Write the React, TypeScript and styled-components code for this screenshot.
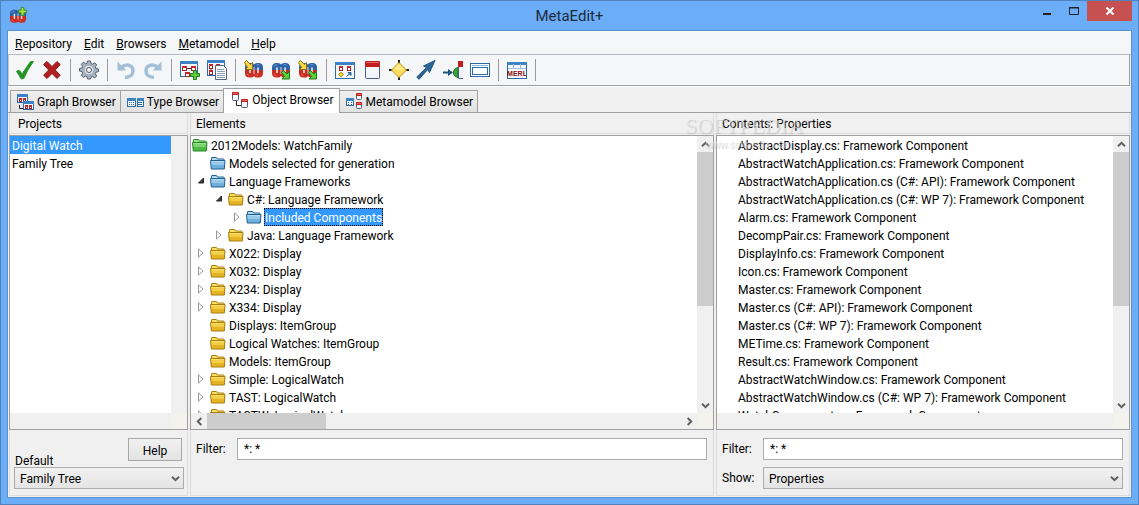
import React from 'react';
import styled, { createGlobalStyle, css } from 'styled-components';

const GlobalStyle = createGlobalStyle`
  *, *::before, *::after { box-sizing: border-box; }
  body { margin: 0; }
  body, button, input, select {
    font-family: Roboto, "Noto Sans", sans-serif;
    font-size: 12px;
    line-height: 18px;
    color: #000;
  }
`;

const LINE = '#a0a0a0';
const FACE = '#f0f0f0';

/* ---------- window frame ---------- */

const Window = styled.div`
  display: flex;
  flex-direction: column;
  height: 100vh;
  min-height: 360px;
  padding: 0 6px 6px;
  border: 1px solid #5083bd;
  background: #6badf6;
`;

const TitleBar = styled.header`
  display: grid;
  grid-template-columns: 1fr auto 1fr;
  height: 29px;
  flex: none;
`;

const Title = styled.h1`
  margin: 0;
  font-size: 15px;
  line-height: 31px;
  font-weight: 400;
  color: #1c2b3d;
`;

const AppMark = styled.div`
  padding: 6px 0 0 2px;
`;

const WindowControls = styled.div`
  display: flex;
  justify-content: flex-end;
  align-items: flex-start;
`;

const WindowButton = styled.button<{ $close?: boolean }>`
  display: flex;
  align-items: center;
  justify-content: center;
  width: ${p => (p.$close ? 45 : 27)}px;
  height: 20px;
  padding: 0;
  border: 0;
  background: ${p => (p.$close ? '#c75050' : 'transparent')};
`;

const Client = styled.main`
  display: flex;
  flex-direction: column;
  flex: 1;
  min-height: 0;
  border: 1px solid #5a92d0;
  background: ${FACE};
`;

const MenuBar = styled.nav`
  display: flex;
  flex: none;
  height: 24px;
  padding: 1px 1px 0;
  background: #f5f6f7;
  border-bottom: 1px solid #b5bac4;
`;

const MenuItem = styled.button`
  padding: 0 6px;
  border: 0;
  background: none;
  line-height: 24px;

  &::first-letter { text-decoration: underline; }
`;

/* ---------- toolbar ---------- */

const ToolBar = styled.div`
  display: flex;
  align-items: center;
  flex: none;
  height: 31px;
  margin-right: 1px;
  padding-left: 2px;
  background: #f5f6f8;
  border: 1px solid ${LINE};
  border-top: 0;
  border-left-color: #c8c8c8;
`;

const ToolGroup = styled.div`
  display: flex;
  align-items: center;
  padding-right: 5px;
  margin-right: 4px;
  border-right: 1px solid #9a9a9a;
`;

const ToolButton = styled.button`
  display: flex;
  align-items: center;
  justify-content: center;
  width: 27px;
  height: 22px;
  padding: 0;
  border: 0;
  background: none;
`;

/* ---------- tabs ---------- */

const TabBar = styled.div`
  display: flex;
  align-items: flex-end;
  flex: none;
  height: 27px;
  padding: 2px 2px 0;
  border-top: 1px solid #fff;
  border-bottom: 1px solid ${LINE};
`;

const Tab = styled.button<{ $active?: boolean }>`
  display: flex;
  align-items: center;
  gap: 3px;
  height: 22px;
  padding: 0 4px 0 6px;
  border: 1px solid ${LINE};
  border-bottom: 0;
  margin-right: -1px;
  background: linear-gradient(#efefef, #e2e2e2);
  ${p => p.$active && css`
    position: relative;
    height: 25px;
    margin-bottom: -1px;
    padding: 0 5px 2px 8px;
    background: #fff;
  `}
`;

/* ---------- panels ---------- */

const Panels = styled.div`
  display: grid;
  grid-template-columns: 179px minmax(0, 524fr) minmax(0, 414fr);
  gap: 2px;
  flex: 1;
  min-height: 0;
  padding: 0 1px 1px;
`;

const Panel = styled.section`
  position: relative;
  display: grid;
  grid-template-rows: 22px minmax(0, 1fr) 65px;
  min-width: 0;
  min-height: 0;
  border: solid #dcdcdc;
  border-width: 0 1px 1px;
  margin: 0;
`;

const PanelTitle = styled.h2<{ $inset?: boolean }>`
  margin: 0 0 1px;
  padding-left: ${p => (p.$inset ? 8 : 5)}px;
  font-size: 12px;
  font-weight: 400;
  line-height: 22px;
  border-bottom: 1px solid #dcdcdc;
`;

const ListFrame = styled.div`
  display: grid;
  grid-template-columns: minmax(0, 1fr) 16px;
  grid-template-rows: minmax(0, 1fr) 16px;
  margin: 0 -1px;
  border: 1px solid ${LINE};
  background: ${FACE};
`;

const List = styled.ul`
  margin: 0;
  padding: 0;
  list-style: none;
  overflow: hidden;
  background: #fff;
`;

const ListRow = styled.li<{ $indent?: number; $selected?: boolean }>`
  height: 18px;
  line-height: 20px;
  padding-left: ${p => p.$indent ?? 2}px;
  white-space: nowrap;
  ${p => p.$selected && css`
    background: #3399ff;
    color: #fff;
  `}
`;

const TreeRow = styled.li<{ $level: number }>`
  display: flex;
  align-items: center;
  height: 18px;
  padding-left: ${p => 1 + Math.max(0, p.$level - 1) * 18}px;
  white-space: nowrap;
`;

const Expander = styled.span`
  display: flex;
  justify-content: center;
  width: 18px;
`;

const TreeLabel = styled.span<{ $selected?: boolean }>`
  margin-left: 2px;
  padding: 0 1px;
  height: 18px;
  line-height: 20px;
  ${p => p.$selected && css`
    line-height: 18px;
    padding: 0;
    background: #3399ff;
    color: #fff;
    border: 1px dotted #000;
  `}
`;

const Scroll = styled.div<{ $horizontal?: boolean }>`
  display: flex;
  flex-direction: ${p => (p.$horizontal ? 'row' : 'column')};
  min-width: 0;
  min-height: 0;
`;

const ScrollArrow = styled.button`
  display: flex;
  flex: none;
  align-items: center;
  justify-content: center;
  width: 16px;
  height: 16px;
  padding: 0;
  border: 0;
  background: none;
`;

const ScrollTrack = styled.div`
  flex: 1;
  min-width: 0;
  min-height: 0;
`;

const ScrollThumb = styled.div<{ $horizontal?: boolean }>`
  width: ${p => (p.$horizontal ? '25%' : '100%')};
  height: ${p => (p.$horizontal ? '100%' : '63%')};
  background: #cdcdcd;
`;

const Corner = styled.div`
  grid-area: 2 / 2;
  background: #f3f2ec;
`;

/* ---------- panel footers ---------- */

const ProjectFooter = styled.div`
  display: grid;
  grid-template-columns: 1fr 54px;
  grid-template-rows: 29px 22px;
  padding: 8px 3px 0 4px;
`;

const DefaultLabel = styled.label`
  align-self: end;
  padding-left: 1px;
  line-height: 12px;
`;

const HelpButton = styled.button`
  height: 23px;
  margin-right: 2px;
  margin-left: -2px;
  border: 1px solid #a8a8a8;
  background: linear-gradient(#f1f1f1, #e3e3e3);
  padding: 2px 0 0;
`;

const FieldGrid = styled.div`
  display: grid;
  grid-template-columns: 41px minmax(0, 1fr);
  grid-auto-rows: 22px;
  row-gap: 7px;
  align-items: center;
  padding: 8px 6px 0 5px;

  label { line-height: 20px; }
`;

const TextField = styled.input`
  width: 100%;
  height: 22px;
  padding: 0 6px;
  border: 1px solid #abadb3;
  background: #fff;
`;

const SelectWrap = styled.span<{ $wide?: boolean }>`
  position: relative;
  display: block;
  ${p => p.$wide && css`grid-column: 1 / -1;`}

  svg {
    position: absolute;
    right: 4px;
    top: 7px;
    pointer-events: none;
  }
`;

const Select = styled.select`
  display: block;
  width: 100%;
  height: 22px;
  padding: 1px 5px 0;
  border: 1px solid #acacac;
  border-radius: 0;
  appearance: none;
  background: linear-gradient(#f1f1f1, #e4e4e4);
`;

const Watermark = styled.div`
  position: absolute;
  left: -32px;
  top: 1px;
  font-family: "Liberation Serif", serif;
  font-size: 22px;
  line-height: 24px;
  white-space: nowrap;
  text-align: center;
  color: rgba(245, 245, 245, 0.5);
  text-shadow: 1px 1px 1px rgba(120, 120, 120, 0.3);
  pointer-events: none;

  sup { font-size: 9px; line-height: 9px; }
  small {
    display: block;
    font-family: "Liberation Sans", sans-serif;
    font-size: 10px;
    line-height: 14px;
  }
`;

/* ---------- drawings ---------- */

const Chevron = ({ dir }: { dir: 'up' | 'down' | 'left' | 'right' }) => {
  const turn = { down: 0, left: 90, up: 180, right: 270 }[dir];
  return (
    <svg width="9" height="9" viewBox="0 0 9 9" aria-hidden="true">
      <path d="M1 2.7 4.5 6.2 8 2.7" fill="none" stroke="#606060" strokeWidth="2" transform={`rotate(${turn} 4.5 4.5)`} />
    </svg>
  );
};

const folderTones = {
  green: ['#24862a', '#4cbc46', '#9be487'],
  blue: ['#24608f', '#6fb0dd', '#b4dbf4'],
  yellow: ['#a87e10', '#e6b422', '#fce063'],
};
type Tone = keyof typeof folderTones;

const Folder = ({ tone }: { tone: Tone }) => {
  const [edge, mid, light] = folderTones[tone];
  return (
    <svg width="16" height="14" viewBox="0 0 16 14" aria-hidden="true">
      <path d="M1.500 12.500v-10.500q0-.5.5-.5h4.500l1 1.500h6q.5 0 .5.5v2" fill={light} stroke={edge} />
      <path d="M.5 4.500h14.500l-.7 8.500h-13z" fill={mid} stroke={edge} />
      <path d="M1.300 5.500h12.700l-.2 3.500H1.600z" fill={light} opacity=".6" />
      <path d="M1.200 5.500h13" stroke={light} />
    </svg>
  );
};

const Twisty = ({ open }: { open: boolean }) => (
  <svg width="8" height="10" viewBox="0 0 8 10" aria-hidden="true">
    {open
      ? <path d="M6.500 2v5h-5z" fill="#404040" stroke="#222" />
      : <path d="M1.500.9v8.200l4.500-4.100z" fill="#fff" stroke="#9a9a9a" />}
  </svg>
);

const Box = ({ x, y, w = 5, h = 5 }: { x: number; y: number; w?: number; h?: number }) => (
  <g>
    <rect x={x + 0.5} y={y + 0.5} width={w - 1} height={h - 1} fill="#fff" stroke="#a62222" />
    <path d={`M${x} ${y + 1}h${w}`} stroke="#c42626" strokeWidth="2" />
  </g>
);

const Card = ({ x, y, w, h, head }: { x: number; y: number; w: number; h: number; head: number }) => (
  <g>
    <rect x={x + 0.5} y={y + 0.5} width={w - 1} height={h - 1} rx="1" fill="#f2f5fa" stroke="#4e5f7a" />
    <path d={`M${x} ${y + 1}q0-1 1-1h${w - 2}q1 0 1 1v${head - 1}h-${w}z`} fill="#bf1f1f" />
    <path d={`M${x + 1} ${y + 1.5}h${w - 2}`} stroke="#e46a62" />
  </g>
);

const Frame = ({ x = 0, y = 0, w = 18, h = 16 }: { x?: number; y?: number; w?: number; h?: number }) => (
  <g>
    <rect x={x + 0.5} y={y + 0.5} width={w - 1} height={h - 1} fill="#f7fafd" stroke="#2c6aa8" />
    <path d={`M${x} ${y + 1.5}h${w}`} stroke="#3d82c4" strokeWidth="3" />
  </g>
);

const Plus = ({ x, y }: { x: number; y: number }) => (
  <path d={`M${x + 3.5} ${y + 0.5}h3v3h3v3h-3v3h-3v-3h-3v-3h3z`} fill="#5fce3c" stroke="#1c7d1c" />
);

/* Two linked loops: blue upper half, red lower half */
const Mark = () => (
  <g>
    <path d="M1 10V7.500Q1 3 5.500 3H7q2 0 3 1.500Q11 3 13 3h1.500Q19 3 19 7.500V10z" fill="#2b62a8" />
    <path d="M1 10v3q0 4.500 4.500 4.500H7q2 0 3-1.500 1 1.500 3 1.500h1.500q4.500 0 4.500-4.500v-3z" fill="#c92c20" />
    <path d="M6 8v4.500M14 8v4.500" stroke="#f3ece8" strokeWidth="1.600" strokeLinecap="round" />
    <path d="M10 7v7" stroke="#e9d5d8" strokeWidth="1" />
    <path d="M3 6.500q1-2 3-2M12.500 4.800q1.500-.5 3 .2" fill="none" stroke="#6d9bd6" />
    <path d="M3 13.500q.5 2 2.500 2.300M11.500 14q.8 1.500 2.500 1.700" fill="none" stroke="#e8685a" />
  </g>
);

const ArrowIn = () => (
  <path d="M.5 2.500 2.500.5l4 4L8.500 2.500v7h-7l2-2z" fill="#f7d648" stroke="#94700c" />
);
const ArrowOut = () => (
  <path d="M10.500 12.500l2-2 3.500 3.500 2.500-2.500v7.500h-7.500l2.500-2.500z" fill="#5fce3c" stroke="#1c7d1c" />
);

const icons: Record<string, React.ReactNode> = {
  Commit: <path d="M1.500 11.500q2-2 3.500-.5l2 3L15.500 1.500h3Q12.500 9.500 8.800 18.500 6.500 19.500 5.500 18.200 4 14.500 1.500 11.500z" fill="#259023" stroke="#2f9c2b" />,
  Abandon: <path d="M5 1.500 10 6.500 15 1.500l3.200 3L13.200 10l5 5.200-3.200 3.300-5-5-5 5-3.400-3.300L6.700 10 1.600 4.500z" fill="#b01e20" stroke="#911a1c" />,
  Options: (
    <g>
      <path d="M8.500 1h3l.5 2.500 1.600.7 2.200-1.400 1.900 2-1.300 2.100.7 1.600 2.400.5v2.600l-2.400.5-.7 1.700 1.300 2.100-1.900 2-2.200-1.400-1.600.7L11.500 19h-3L8 16.700l-1.600-.7-2.100 1.400-2-2 1.300-2.100-.6-1.700-2.500-.5V8.500L3 8l.6-1.600L2.300 4.300l2-2L6.400 3.700 8 3.300z" fill="#a9b3bf" stroke="#566170" />
      <circle cx="10" cy="10" r="5" fill="#dde2e8" stroke="#9aa4b0" />
      <circle cx="10" cy="10" r="2.500" fill="#f5f6f8" stroke="#4f5966" />
    </g>
  ),
  Undo: (
    <g>
      <path d="M5 7.500q4-3.500 8-2.200t4 5-2 5.200-6 2" fill="none" stroke="#a3c0d6" strokeWidth="3.400" />
      <path d="M1.500 1.500v9h9z" fill="#a3c0d6" />
    </g>
  ),
  Redo: (
    <g>
      <path d="M15 7.500q-4-3.500-8-2.200t-4 5 2 5.200 6 2" fill="none" stroke="#a3c0d6" strokeWidth="3.400" />
      <path d="M18.500 1.500v9h-9z" fill="#a3c0d6" />
    </g>
  ),
  'New Graph': (
    <g>
      <Frame y={1} />
      <Box x={2} y={6} /><Box x={11} y={6} /><Box x={5} y={12} />
      <path d="M7 8.500h4M13.500 11v2M10 14.500h2" stroke="#333" />
      <Plus x={10} y={10} />
    </g>
  ),
  'Graph List': (
    <g>
      <Frame />
      <Box x={2} y={4} w={4} /><Box x={2} y={10} w={4} /><Box x={9} y={4} w={4} />
      <path d="M4 9v1" stroke="#333" />
      <path d="M8.500 5.500h8l3 3v11h-11z" fill="#fff" stroke="#55657a" />
      <path d="M10 9.500h7M10 11.500h8M10 13.500h8M10 15.500h8M10 17.500h8" stroke="#8b9db5" />
    </g>
  ),
  Import: <g><Mark /><ArrowIn /></g>,
  Export: <g><Mark /><ArrowOut /></g>,
  Exchange: <g><Mark /><ArrowIn /><ArrowOut /></g>,
  'Graph Tool': (
    <g>
      <Frame y={2} w={20} h={17} />
      <Box x={4} y={6} w={4} h={5} /><Box x={12} y={6} w={4} h={5} />
      <path d="M6 12.200 8.500 14.500 6 17 3.500 14.500z" fill="#f4cf3c" stroke="#b18e1c" />
      <path d="M11.500 16.500l4-3.500M13 12.500h3v3z" stroke="#2b6396" fill="#2b6396" />
    </g>
  ),
  'Object Tool': <Card x={3} y={1} w={15} h={18} head={6} />,
  'Relationship Tool': (
    <g>
      <path d="M10 0v20M0 10h20" stroke="#222" strokeWidth="2" />
      <path d="M10 2.500 17.500 10 10 17.500 2.500 10z" fill="#fbdc5c" stroke="#c39518" />
      <path d="M10 4.500 15 9.500H5z" fill="#fdeb9a" />
    </g>
  ),
  'Role Tool': (
    <path d="M.8 17 10.500 7.500 7.500 6l11.500-5.500-5.500 12-1.800-3L3 19.300z" fill="#2c6595" stroke="#1f5380" />
  ),
  'Port Tool': (
    <g>
      <path d="M0 12.500h6" stroke="#1f5380" strokeWidth="2" />
      <path d="M5 9l5 3.500L5 16z" fill="#1f5380" />
      <path d="M15 7.500q-4.500 1-4.500 5t4.500 5z" fill="#39a53a" stroke="#1b6e20" />
      <path d="M20 1.500h-4.500v17H20" fill="#eef2f8" stroke="#4e5f7a" />
      <path d="M15 1h5v6h-5z" fill="#bf1f1f" />
    </g>
  ),
  'Property Tool': (
    <g fill="#fff" stroke="#2c6aa8">
      <rect x=".5" y="3.500" width="19" height="13" />
      <rect x="2.500" y="7.500" width="15" height="7" />
      <path d="M2 5.500h16" stroke="#8db4da" />
    </g>
  ),
  'MERL Tool': (
    <g>
      <Frame y={2} w={20} h={17} />
      <path d="M6.500 4v4M13.500 4v4M1 8.500h18" stroke="#9dbedd" />
      <text x="10" y="16" textAnchor="middle" fontFamily="Liberation Sans, sans-serif" fontWeight="700" fontSize="7" fill="#8c1010">MERL</text>
    </g>
  ),
};

const toolGroups = [
  ['Commit', 'Abandon'],
  ['Options'],
  ['Undo', 'Redo'],
  ['New Graph', 'Graph List'],
  ['Import', 'Export', 'Exchange'],
  ['Graph Tool', 'Object Tool', 'Relationship Tool', 'Role Tool', 'Port Tool', 'Property Tool'],
  ['MERL Tool'],
];

const GraphTabIcon = () => (
  <svg width="17" height="16" viewBox="0 0 17 16" aria-hidden="true">
    <path d="M2.500 11v3.500h4" fill="none" stroke="#222" />
    <Frame w={11} h={9} /><Box x={2} y={4} w={3} h={4} /><Box x={6} y={4} w={3} h={4} />
    <Frame x={6} y={7} w={11} h={9} /><Box x={8} y={11} w={3} h={4} /><Box x={12} y={11} w={3} h={4} />
  </svg>
);
const TypeTabIcon = () => (
  <svg width="17" height="16" viewBox="0 0 17 16" aria-hidden="true">
    <Frame y={4} w={9} h={9} />
    <path d="M2.500 8v1M4.500 8v1M6.500 8v1M2.500 10v1M4.500 10v1M6.500 10v1" stroke="#2c6aa8" />
    <Frame x={10} y={4} w={7} h={9} />
    <path d="M11 8.500h4M11 10.500h4" stroke="#2c6aa8" />
  </svg>
);
const ObjectTabIcon = () => (
  <svg width="17" height="17" viewBox="0 0 17 17" aria-hidden="true">
    <path d="M4.500 9v4.500H9" fill="none" stroke="#222" />
    <Card x={0} y={0} w={7} h={9} head={3} />
    <Card x={9} y={7} w={7} h={9} head={3} />
  </svg>
);
const MetamodelTabIcon = () => (
  <svg width="17" height="17" viewBox="0 0 17 17" aria-hidden="true">
    <Frame y={5} w={8} h={8} />
    <path d="M2.500 9v1M5.500 9v1M2.500 11v1M5.500 11v1" stroke="#2c6aa8" />
    <Card x={10} y={0} w={6} h={7} head={3} />
    <Card x={10} y={9} w={6} h={7} head={3} />
  </svg>
);

const tabs = [
  { name: 'Graph Browser', icon: <GraphTabIcon /> },
  { name: 'Type Browser', icon: <TypeTabIcon /> },
  { name: 'Object Browser', icon: <ObjectTabIcon />, active: true },
  { name: 'Metamodel Browser', icon: <MetamodelTabIcon /> },
];

/* ---------- data ---------- */

type Node = { text: string; level: number; tone: Tone; open?: boolean; selected?: boolean };

const tree: Node[] = [
  { text: '2012Models: WatchFamily', level: 0, tone: 'green' },
  { text: 'Models selected for generation', level: 1, tone: 'blue' },
  { text: 'Language Frameworks', level: 1, tone: 'blue', open: true },
  { text: 'C#: Language Framework', level: 2, tone: 'yellow', open: true },
  { text: 'Included Components', level: 3, tone: 'blue', open: false, selected: true },
  { text: 'Java: Language Framework', level: 2, tone: 'yellow', open: false },
  { text: 'X022: Display', level: 1, tone: 'yellow', open: false },
  { text: 'X032: Display', level: 1, tone: 'yellow', open: false },
  { text: 'X234: Display', level: 1, tone: 'yellow', open: false },
  { text: 'X334: Display', level: 1, tone: 'yellow', open: false },
  { text: 'Displays: ItemGroup', level: 1, tone: 'yellow' },
  { text: 'Logical Watches: ItemGroup', level: 1, tone: 'yellow' },
  { text: 'Models: ItemGroup', level: 1, tone: 'yellow' },
  { text: 'Simple: LogicalWatch', level: 1, tone: 'yellow', open: false },
  { text: 'TAST: LogicalWatch', level: 1, tone: 'yellow', open: false },
  { text: 'TASTW: LogicalWatch', level: 1, tone: 'yellow', open: false },
];

const contents = [
  'AbstractDisplay.cs',
  'AbstractWatchApplication.cs',
  'AbstractWatchApplication.cs (C#: API)',
  'AbstractWatchApplication.cs (C#: WP 7)',
  'Alarm.cs',
  'DecompPair.cs',
  'DisplayInfo.cs',
  'Icon.cs',
  'Master.cs',
  'Master.cs (C#: API)',
  'Master.cs (C#: WP 7)',
  'METime.cs',
  'Result.cs',
  'AbstractWatchWindow.cs',
  'AbstractWatchWindow.cs (C#: WP 7)',
  'WatchComponent.cs',
];

const VerticalScroll = ({ visible }: { visible: number }) => (
  <Scroll>
    <ScrollArrow aria-label="Scroll up"><Chevron dir="up" /></ScrollArrow>
    <ScrollTrack><ScrollThumb style={{ height: `${visible}%` }} /></ScrollTrack>
    <ScrollArrow aria-label="Scroll down"><Chevron dir="down" /></ScrollArrow>
  </Scroll>
);

export default function App() {
  return (
    <>
      <GlobalStyle />
      <Window>
        <TitleBar>
          <AppMark>
            <svg width="18" height="18" viewBox="0 0 20 20" aria-hidden="true">
              <Mark />
              <path d="M13.500.5h3v3h3v3h-3v3h-3v-3h-3v-3h3z" fill="#a8e43c" stroke="#3d8a1c" />
            </svg>
          </AppMark>
          <Title>MetaEdit+</Title>
          <WindowControls>
            <WindowButton aria-label="Minimize">
              <svg width="8" height="8"><path d="M0 7h8" stroke="#222" strokeWidth="2" /></svg>
            </WindowButton>
            <WindowButton aria-label="Maximize">
              <svg width="10" height="8"><path d="M.5.5h9v7h-9zM0 1h10" fill="none" stroke="#222" /></svg>
            </WindowButton>
            <WindowButton $close aria-label="Close">
              <svg width="8" height="8"><path d="M.5.5l7 7M7.500.5l-7 7" stroke="#fff" strokeWidth="2" /></svg>
            </WindowButton>
          </WindowControls>
        </TitleBar>

        <Client>
          <MenuBar>
            {['Repository', 'Edit', 'Browsers', 'Metamodel', 'Help'].map(m => <MenuItem key={m}>{m}</MenuItem>)}
          </MenuBar>

          <ToolBar role="toolbar">
            {toolGroups.map(group => (
              <ToolGroup key={group[0]}>
                {group.map(name => (
                  <ToolButton key={name} aria-label={name}>
                    <svg width="20" height="20" viewBox="0 0 20 20" aria-hidden="true">{icons[name]}</svg>
                  </ToolButton>
                ))}
              </ToolGroup>
            ))}
          </ToolBar>

          <TabBar role="tablist">
            {tabs.map(t => (
              <Tab key={t.name} role="tab" aria-selected={!!t.active} $active={t.active}>
                {t.icon}
                <span>{t.name}</span>
              </Tab>
            ))}
          </TabBar>

          <Panels>
            <Panel>
              <PanelTitle $inset>Projects</PanelTitle>
              <ListFrame>
                <List>
                  <ListRow $selected>Digital Watch</ListRow>
                  <ListRow>Family Tree</ListRow>
                </List>
                <Corner />
              </ListFrame>
              <ProjectFooter>
                <DefaultLabel htmlFor="default-project">Default</DefaultLabel>
                <HelpButton>Help</HelpButton>
                <SelectWrap $wide>
                  <Select id="default-project" defaultValue="Family Tree">
                    <option>Family Tree</option>
                    <option>Digital Watch</option>
                  </Select>
                  <Chevron dir="down" />
                </SelectWrap>
              </ProjectFooter>
            </Panel>

            <Panel>
              <PanelTitle>Elements</PanelTitle>
              <ListFrame>
                <List role="tree">
                  {tree.map(n => (
                    <TreeRow key={n.text} role="treeitem" aria-expanded={n.open} aria-selected={!!n.selected} $level={n.level}>
                      {n.level > 0 && <Expander>{n.open !== undefined && <Twisty open={n.open} />}</Expander>}
                      <Folder tone={n.tone} />
                      <TreeLabel $selected={n.selected}>{n.text}</TreeLabel>
                    </TreeRow>
                  ))}
                </List>
                <VerticalScroll visible={63} />
                <Scroll $horizontal>
                  <ScrollArrow aria-label="Scroll left"><Chevron dir="left" /></ScrollArrow>
                  <ScrollTrack><ScrollThumb $horizontal /></ScrollTrack>
                  <ScrollArrow aria-label="Scroll right"><Chevron dir="right" /></ScrollArrow>
                </Scroll>
                <Corner />
              </ListFrame>
              <FieldGrid>
                <label htmlFor="element-filter">Filter:</label>
                <TextField id="element-filter" defaultValue="*: *" />
              </FieldGrid>
            </Panel>

            <Panel>
              <PanelTitle>Contents: Properties</PanelTitle>
              <Watermark>
                SOFTPEDIA<sup>™</sup>
                <small>www.softpedia.com</small>
              </Watermark>
              <ListFrame>
                <List>
                  {contents.map(c => <ListRow key={c} $indent={21}>{c}: Framework Component</ListRow>)}
                </List>
                <VerticalScroll visible={63} />
                <Corner />
              </ListFrame>
              <FieldGrid>
                <label htmlFor="content-filter">Filter:</label>
                <TextField id="content-filter" defaultValue="*: *" />
                <label htmlFor="content-show">Show:</label>
                <SelectWrap>
                  <Select id="content-show" defaultValue="Properties">
                    <option>Properties</option>
                  </Select>
                  <Chevron dir="down" />
                </SelectWrap>
              </FieldGrid>
            </Panel>
          </Panels>
        </Client>
      </Window>
    </>
  );
}
